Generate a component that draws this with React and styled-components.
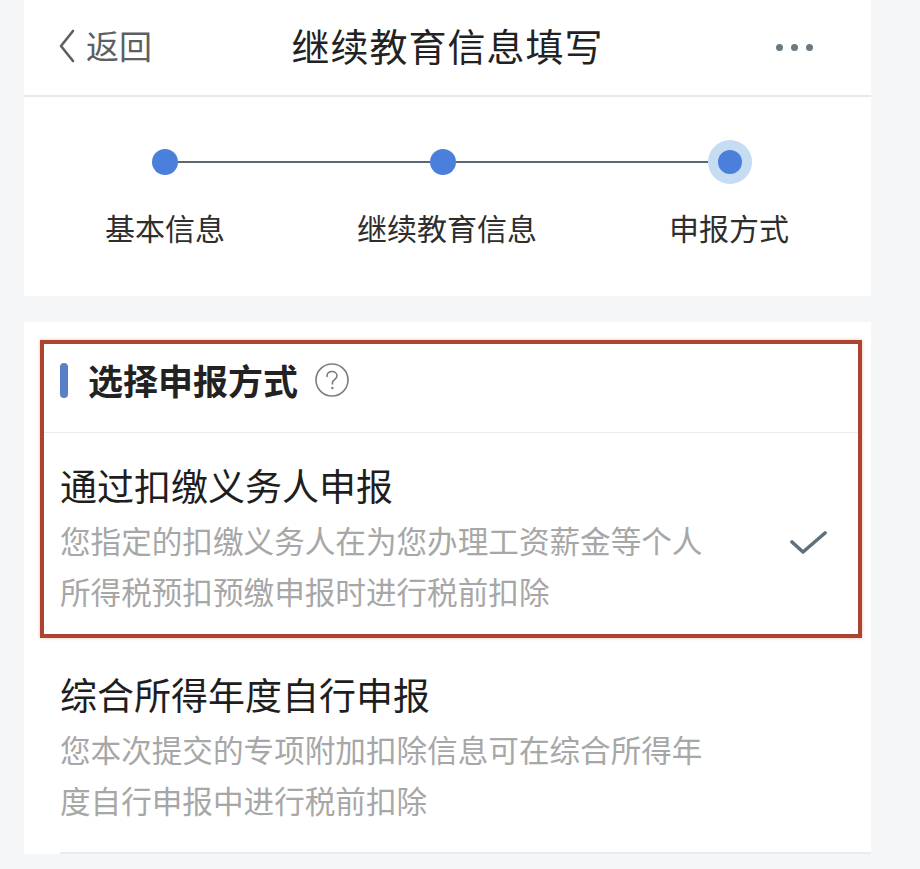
import React from "react";
import styled, { createGlobalStyle } from "styled-components";

const Global = createGlobalStyle`
  html, body { margin: 0; padding: 0; background: #f5f6f8; }
  body { font-family: "Noto Sans CJK SC", "Noto Sans", sans-serif; }
`;

const Page = styled.div`
  width: 920px;
  height: 869px;
  background: #f5f6f8;
  overflow: hidden;
`;

const Column = styled.div`
  width: 847px;
  margin-left: 24px;
  display: flex;
  flex-direction: column;
`;

const Header = styled.header`
  height: 95px;
  background: #fff;
  border-bottom: 2px solid #e9e9ea;
  display: grid;
  grid-template-columns: 1fr auto 1fr;
  align-items: center;
`;

const Back = styled.div`
  justify-self: start;
  display: flex;
  align-items: center;
  gap: 10px;
  padding-left: 34px;
  color: #5c5f63;
  font-size: 33px;
  line-height: 1;
  padding-bottom: 4px;
`;

const Title = styled.h1`
  margin: 0;
  font-size: 38px;
  font-weight: 400;
  color: #222;
  letter-spacing: 1px;
  padding-bottom: 6px;
`;

const More = styled.div`
  justify-self: end;
  display: flex;
  gap: 8px;
  padding-right: 58px;
`;

const MoreDot = styled.span`
  width: 7px;
  height: 7px;
  border-radius: 50%;
  background: #6b7a82;
`;

const Steps = styled.section`
  background: #fff;
  height: 199px;
  display: flex;
  flex-direction: column;
`;

const Track = styled.div`
  display: flex;
  align-items: center;
  padding: 43px 119px 0 128px;
  height: 44px;
`;

const Dot = styled.span`
  flex: none;
  width: ${(p) => (p.$active ? "24px" : "26px")};
  height: ${(p) => (p.$active ? "24px" : "26px")};
  border-radius: 50%;
  background: #4b7fdc;
  box-shadow: ${(p) => (p.$active ? "0 0 0 10px #c6dcf3" : "none")};
  margin: ${(p) => (p.$active ? "0 10px" : "0")};
`;

const Line = styled.span`
  flex: 1;
  height: 2px;
  background: #5d6670;
`;

const Labels = styled.div`
  display: grid;
  grid-template-columns: repeat(3, 282px);
  margin-top: 21px;
`;

const Label = styled.span`
  text-align: center;
  font-size: 30px;
  color: #2e2e2e;
  line-height: 44px;
`;

const Card = styled.section`
  margin-top: 26px;
  background: #fff;
  padding-top: 18px;
  display: flex;
  flex-direction: column;
`;

const Highlight = styled.div`
  margin: 0 9px 0 16px;
  border: 4px solid #ad4431;
  box-shadow: 0 0 3px rgba(230, 120, 90, 0.5);
  display: flex;
  flex-direction: column;
`;

const SectionHead = styled.div`
  display: flex;
  align-items: center;
  padding: 14px 16px 30px;
  border-bottom: 1px solid #ececec;
`;

const Bar = styled.span`
  width: 8px;
  height: 35px;
  border-radius: 4px;
  background: #5b7fc6;
  margin-right: 20px;
`;

const SectionTitle = styled.h2`
  margin: 0;
  font-size: 35px;
  font-weight: 700;
  color: #222;
  line-height: 44px;
  margin-right: 16px;
`;

const Option = styled.div`
  display: flex;
  align-items: center;
  justify-content: space-between;
  padding: ${(p) => p.$pad};
  border-bottom: ${(p) => (p.$divider ? "2px solid #ebebed" : "none")};
  margin-left: ${(p) => (p.$divider ? "36px" : "0")};
`;

const OptionText = styled.div`
  display: flex;
  flex-direction: column;
`;

const OptionTitle = styled.div`
  font-size: 37px;
  color: #1e1e1e;
  line-height: 50px;
  margin-bottom: 5px;
`;

const OptionDesc = styled.div`
  font-size: 30.6px;
  color: #a7a7a7;
  line-height: 51px;
  max-width: 21.3em;
`;

const Check = styled.svg`
  flex: none;
  width: 38px;
  height: 26px;
  margin-right: 30px;
  margin-top: 8px;
`;

export default function App() {
  return (
    <Page>
      <Global />
      <Column>
        <Header>
          <Back>
            <svg width="18" height="34" viewBox="0 0 18 34">
              <polyline
                points="15,2 3,17 15,32"
                fill="none"
                stroke="#5c5f63"
                strokeWidth="2.6"
                strokeLinecap="round"
                strokeLinejoin="round"
              />
            </svg>
            <span>返回</span>
          </Back>
          <Title>继续教育信息填写</Title>
          <More>
            <MoreDot />
            <MoreDot />
            <MoreDot />
          </More>
        </Header>

        <Steps>
          <Track>
            <Dot />
            <Line />
            <Dot />
            <Line />
            <Dot $active />
          </Track>
          <Labels>
            <Label>基本信息</Label>
            <Label>继续教育信息</Label>
            <Label>申报方式</Label>
          </Labels>
        </Steps>

        <Card>
          <Highlight>
            <SectionHead>
              <Bar />
              <SectionTitle>选择申报方式</SectionTitle>
              <svg width="36" height="36" viewBox="0 0 36 36">
                <circle cx="18" cy="18" r="16" fill="none" stroke="#7a7d80" strokeWidth="1.6" />
                <path
                  d="M13 14.5 C13 11 15.5 9.5 18 9.5 C20.8 9.5 23 11.3 23 14 C23 16.8 19.2 17.6 18.4 20.5 L18.4 22"
                  fill="none"
                  stroke="#7a7d80"
                  strokeWidth="1.6"
                  strokeLinecap="round"
                />
                <circle cx="18.4" cy="26" r="1.2" fill="#7a7d80" />
              </svg>
            </SectionHead>
            <Option $pad="27px 0 17px 16px">
              <OptionText>
                <OptionTitle>通过扣缴义务人申报</OptionTitle>
                <OptionDesc>您指定的扣缴义务人在为您办理工资薪金等个人所得税预扣预缴申报时进行税前扣除</OptionDesc>
              </OptionText>
              <Check viewBox="0 0 38 26">
                <polyline
                  points="2,12 13,22 35,3"
                  fill="none"
                  stroke="#5f717d"
                  strokeWidth="3.6"
                  strokeLinecap="round"
                  strokeLinejoin="round"
                />
              </Check>
            </Option>
          </Highlight>
          <Option $pad="31px 0 26px 0" $divider>
            <OptionText>
              <OptionTitle>综合所得年度自行申报</OptionTitle>
              <OptionDesc>您本次提交的专项附加扣除信息可在综合所得年度自行申报中进行税前扣除</OptionDesc>
            </OptionText>
          </Option>
        </Card>
      </Column>
    </Page>
  );
}
